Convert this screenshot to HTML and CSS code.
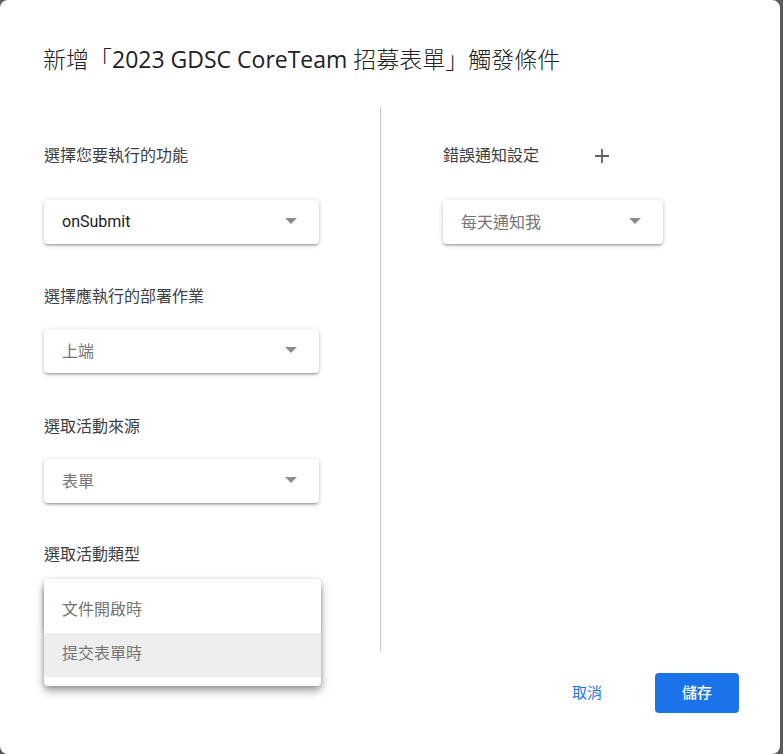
FILE: index.html
```html
<!DOCTYPE html>
<html lang="zh-Hant">
<head>
<meta charset="utf-8">
<title>觸發條件</title>
<link rel="stylesheet" href="styles.css">
</head>
<body>
<div class="dialog">
  <h1 class="title">新增「<span class="latin">2023 GDSC CoreTeam</span> 招募表單」觸發條件</h1>
  <div class="content">
    <div class="col col-left">
      <div class="label l1">選擇您要執行的功能</div>
      <div class="select s1"><span class="value dark">onSubmit</span><span class="arrow"></span></div>
      <div class="label l2">選擇應執行的部署作業</div>
      <div class="select s2"><span class="value">上端</span><span class="arrow"></span></div>
      <div class="label l3">選取活動來源</div>
      <div class="select s3"><span class="value">表單</span><span class="arrow"></span></div>
      <div class="label l4">選取活動類型</div>
      <div class="select-wrap">
        <div class="select s4"><span class="value">提交表單時</span><span class="arrow"></span></div>
        <div class="menu">
          <div class="menu-item">文件開啟時</div>
          <div class="menu-item active">提交表單時</div>
        </div>
      </div>
    </div>
    <div class="divider"></div>
    <div class="col col-right">
      <div class="label-row">
        <div class="label">錯誤通知設定</div>
        <svg class="plus" width="16" height="16" viewBox="0 0 16 16"><path d="M8 1v14M1 8h14" stroke="#5f6368" stroke-width="1.8" fill="none"/></svg>
      </div>
      <div class="select s-right"><span class="value">每天通知我</span><span class="arrow"></span></div>
    </div>
  </div>
  <div class="footer">
    <button class="btn cancel">取消</button>
    <button class="btn save">儲存</button>
  </div>
</div>
</body>
</html>
```
FILE: styles.css
```css
html, body {
  margin: 0;
  padding: 0;
}
body {
  background: #5c5c5c;
  width: 783px;
  height: 754px;
  overflow: hidden;
  font-family: Roboto, "Noto Sans CJK TC", sans-serif;
}
.dialog {
  width: 780px;
  height: 754px;
  background: #fff;
  border-radius: 8px;
  box-sizing: border-box;
  padding: 45px 41px 0 43px;
}
.title {
  margin: 0;
  font-family: "Open Sans", "Noto Sans CJK TC", sans-serif;
  font-weight: 300;
  font-size: 23px;
  line-height: 28px;
  color: #202124;
  white-space: nowrap;
}
.title .latin {
  font-weight: 500;
}
.content {
  display: flex;
  margin-top: 34px;
}
.col-left {
  width: 336px;
  padding-top: 37px;
  margin-left: 1px;
}
.divider {
  width: 1px;
  height: 544px;
  background: #c4c4c4;
}
.col-right {
  padding-left: 62px;
  padding-top: 37px;
}
.label {
  font-size: 16px;
  line-height: 24px;
  color: #3c4043;
}
.l1 { margin-bottom: 32px; }
.l2 { margin-top: 41px; margin-bottom: 20px; }
.l3 { margin-top: 42px; margin-bottom: 20px; }
.l4 { margin-top: 40px; margin-bottom: 20px; }
.select {
  width: 275px;
  height: 44px;
  box-sizing: border-box;
  background: #fff;
  border-radius: 4px;
  box-shadow: 0 2px 2px 0 rgba(0,0,0,.14), 0 3px 1px -2px rgba(0,0,0,.12), 0 1px 5px 0 rgba(0,0,0,.2);
  display: flex;
  align-items: center;
  justify-content: space-between;
  padding: 0 22px 2px 18px;
}
.value {
  font-size: 16px;
  color: #757575;
}
.value.dark {
  color: #202124;
}
.arrow {
  width: 0;
  height: 0;
  border-left: 6px solid transparent;
  border-right: 6px solid transparent;
  border-top: 6px solid #8c8c8c;
}
.select-wrap {
  position: relative;
}
.menu {
  position: absolute;
  top: -8px;
  left: 0;
  width: 277px;
  background: #fff;
  border-radius: 4px;
  padding: 10px 0 9px;
  box-shadow: 0 5px 10px rgba(0,0,0,.35), 0 1px 4px rgba(0,0,0,.2);
}
.menu-item {
  height: 44px;
  line-height: 42px;
  padding-left: 18px;
  font-size: 16px;
  color: #757575;
}
.menu-item.active {
  background: #eeeeee;
}
.label-row {
  display: flex;
  align-items: center;
  gap: 55px;
  margin-bottom: 32px;
}
.plus {
  display: block;
  width: 16px;
  height: 16px;
}
.s-right {
  width: 220px;
}
.footer {
  display: flex;
  justify-content: flex-end;
  gap: 26px;
  margin-top: 22px;
}
.btn {
  width: 84px;
  height: 40px;
  border: none;
  border-radius: 4px;
  padding: 0 0 3px;
  font-family: Roboto, "Noto Sans CJK TC", sans-serif;
  font-size: 15px;
  font-weight: 500;
  cursor: pointer;
}
.cancel {
  background: transparent;
  color: #1a73e8;
  font-weight: 400;
}
.save {
  background: #1a73e8;
  color: #fff;
}
```
